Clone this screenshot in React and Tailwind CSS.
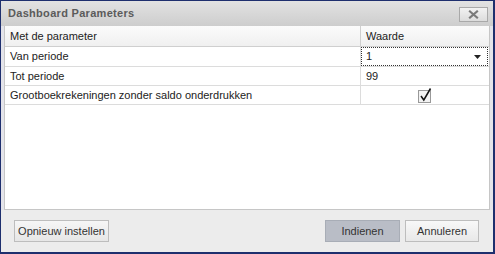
import React from "react";

export default function App() {
  const font = { fontFamily: '"Liberation Sans", Arial, sans-serif' };
  return (
    <div
      className="w-[495px] h-[254px] bg-[#d6d8e2] border border-[#1e2f6e] border-b-2 border-r-2 flex flex-col text-[#222]"
      style={font}
    >
      {/* Title bar */}
      <div className="h-[25px] shrink-0 flex items-center justify-between pl-[7px] pr-[5px] bg-gradient-to-b from-[#e2e2e2] to-[#cdcdcd]">
        <span className="text-[11px] font-bold text-[#5b5b5b] tracking-[0.3px]">Dashboard Parameters</span>
        <div className="w-[29px] h-[15px] mt-[2px] border border-[#a9a9a9] bg-gradient-to-b from-[#f2f2f2] to-[#dcdcdc] flex items-center justify-center">
          <svg width="11" height="9" viewBox="0 0 11 9">
            <path d="M2 1.5 L9 7.5 M9 1.5 L2 7.5" stroke="#7a7a7a" strokeWidth="2.2" strokeLinecap="square" />
          </svg>
        </div>
      </div>
      {/* Body */}
      <div className="flex-1 flex flex-col px-[3px] bg-[#e4e4ea]">
        <div className="flex-1 bg-white border border-[#c6c6c6] border-t-0 flex flex-col text-[11px]">
          {/* Header */}
          <div className="h-[21px] flex border-b border-[#cfcfcf] bg-gradient-to-b from-[#fbfbfb] to-[#f0f0f0]">
            <div className="w-[356px] pl-[5px] flex items-center border-r border-[#cfcfcf]">Met de parameter</div>
            <div className="flex-1 pl-[5px] flex items-center">Waarde</div>
          </div>
          {/* Row 1 */}
          <div className="h-[20px] flex border-b border-[#dcdcdc]">
            <div className="w-[356px] pl-[5px] flex items-center border-r border-[#dcdcdc]">Van periode</div>
            <div className="flex-1 flex items-stretch p-0">
              <div className="flex-1 border border-dotted border-[#333] flex items-center justify-between pl-[4px] pr-[6px] mr-[1px]">
                <span>1</span>
                <svg width="7" height="4" viewBox="0 0 7 4">
                  <path d="M0 0 H7 L3.5 4 Z" fill="#222" />
                </svg>
              </div>
            </div>
          </div>
          {/* Row 2 */}
          <div className="h-[19px] flex border-b border-[#dcdcdc]">
            <div className="w-[356px] pl-[5px] flex items-center border-r border-[#dcdcdc]">Tot periode</div>
            <div className="flex-1 pl-[5px] flex items-center">99</div>
          </div>
          {/* Row 3 */}
          <div className="h-[19px] flex border-b border-[#dcdcdc]">
            <div className="w-[356px] pl-[5px] flex items-center border-r border-[#dcdcdc]">Grootboekrekeningen zonder saldo onderdrukken</div>
            <div className="flex-1 flex items-center justify-center">
              <svg width="14" height="15" viewBox="0 0 14 15">
                <rect x="0.5" y="2.5" width="12" height="12" fill="#f2f2f2" stroke="#999" />
                <path d="M3 8 L5.8 12 L12.5 0.5" fill="none" stroke="#111" strokeWidth="1.5" />
              </svg>
            </div>
          </div>
        </div>
        {/* Footer */}
        <div className="h-[42px] shrink-0 flex items-center justify-between bg-[#ececec] -mx-[3px] pl-[13px] pr-[14px]">
          <button className="h-[22px] w-[95px] text-[11px] text-[#333] border border-[#bdbdbd] bg-gradient-to-b from-[#f6f6f6] to-[#e6e6e6]">
            Opnieuw instellen
          </button>
          <div className="flex gap-[5px]">
            <button className="h-[22px] w-[75px] text-[11px] text-[#333] border border-[#a8adb6] bg-[#b9bdc6]">
              Indienen
            </button>
            <button className="h-[22px] w-[74px] text-[11px] text-[#333] border border-[#bdbdbd] bg-gradient-to-b from-[#f8f8f8] to-[#e8e8e8]">
              Annuleren
            </button>
          </div>
        </div>
      </div>
    </div>
  );
}
